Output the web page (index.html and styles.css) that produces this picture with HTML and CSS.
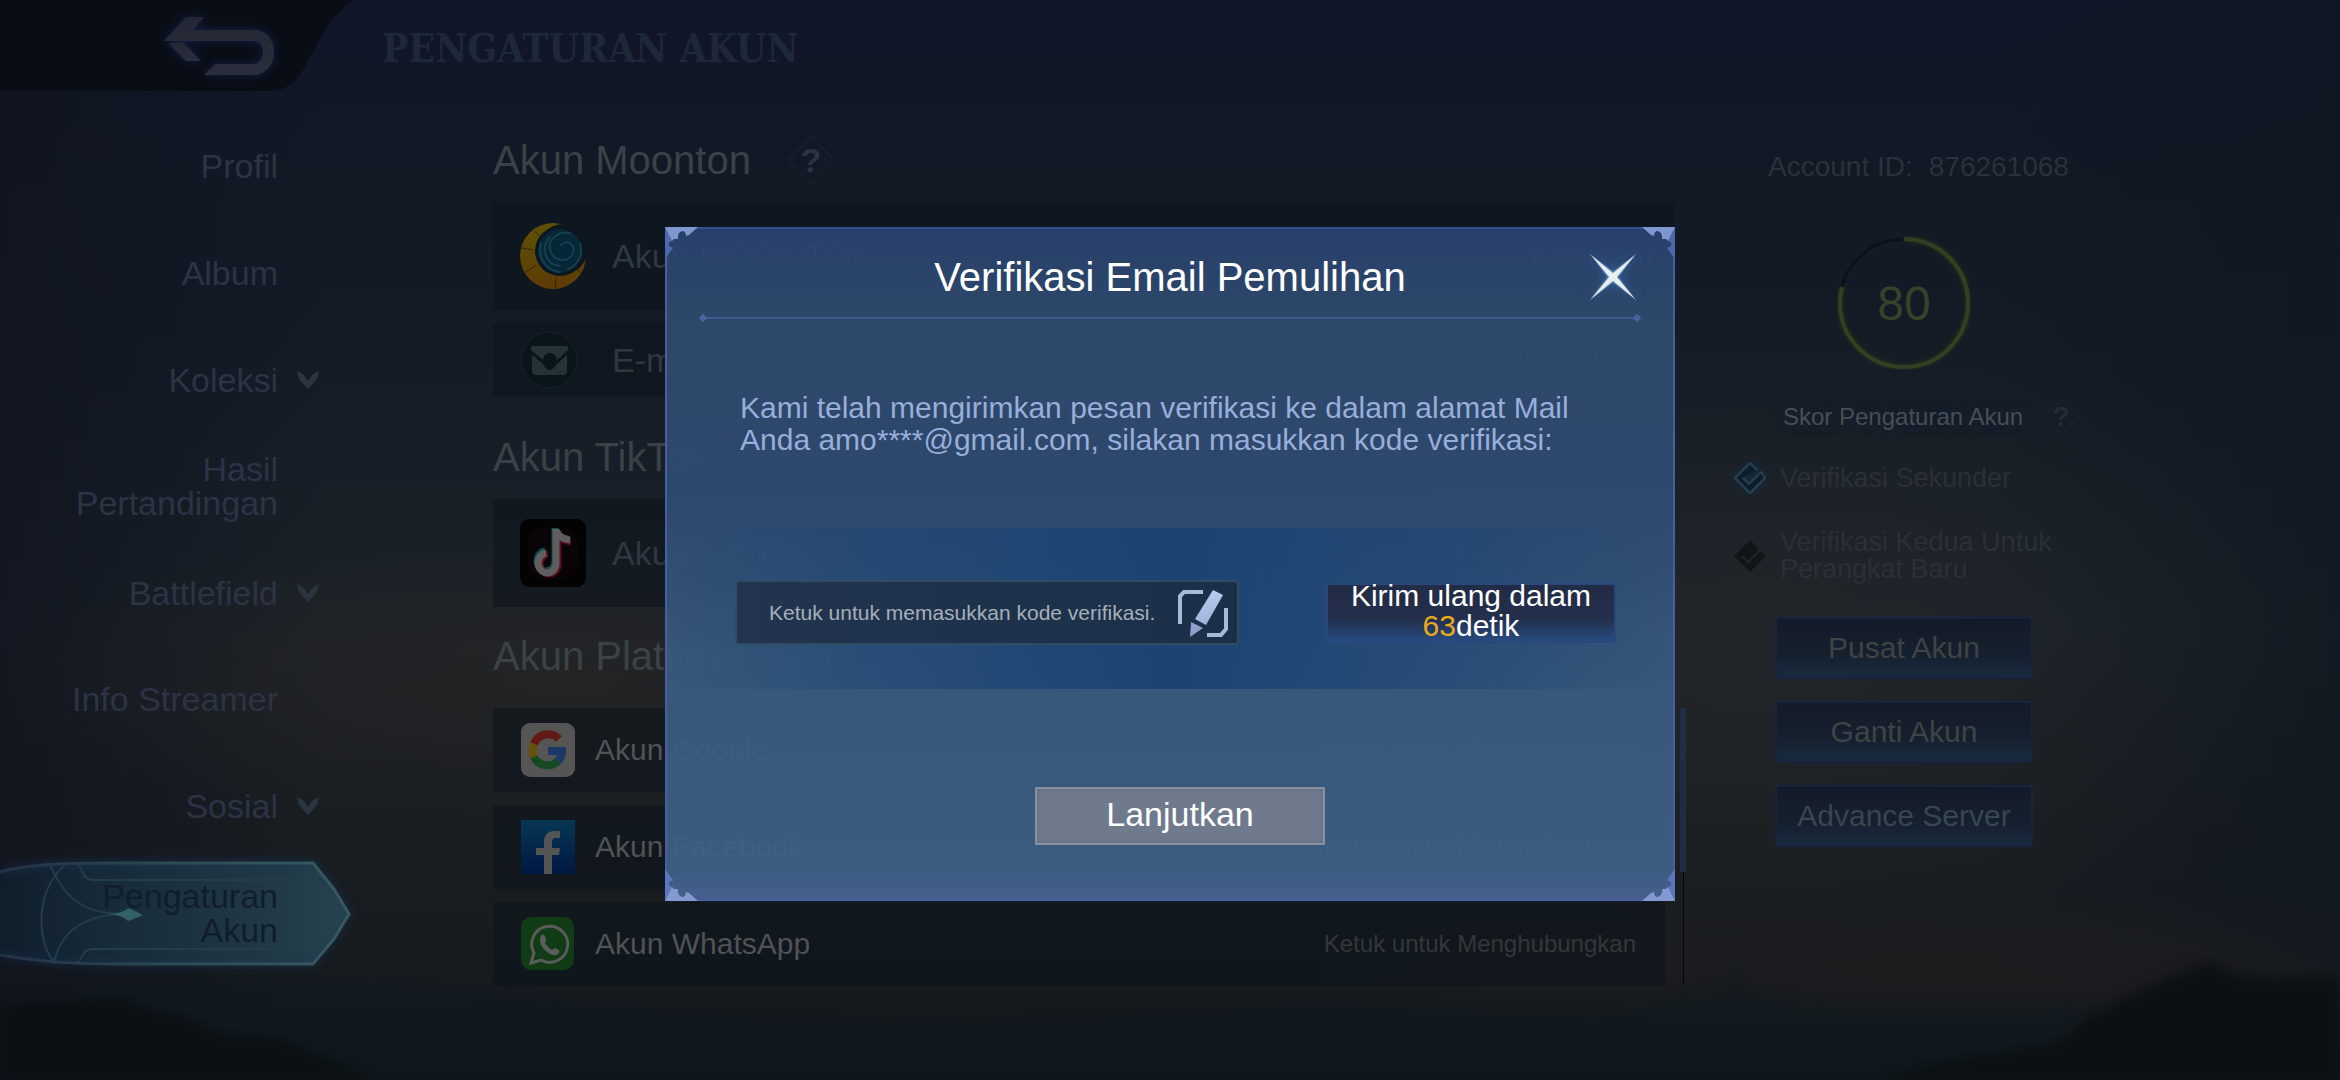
FILE: index.html
```html
<!DOCTYPE html>
<html lang="id">
<head>
<meta charset="utf-8">
<meta name="viewport" content="width=device-width, initial-scale=1">
<title>Pengaturan Akun</title>
<link rel="stylesheet" href="styles.css">
</head>
<body>
<svg class="scenery" viewBox="0 0 2340 140" preserveAspectRatio="none" aria-hidden="true">
  <path class="haze" d="M0 70 Q200 20 520 60 T1100 82 T1600 74 L1700 50 L1728 46 L1734 8 L1742 40 L1770 52 L1850 66 L2060 64 L2340 60 V140 H0Z"/>
  <path class="ridge" d="M0 66 L60 62 L126 57 L140 68 L187 78 L220 95 L275 98 L329 120 L378 140 H0Z"/>
  <path class="ridge" d="M1870 140 L1950 122 L2059 103 L2085 78 L2143 50 L2185 30 L2210 22 L2235 34 L2269 38 L2340 36 V140Z"/>
</svg>

<header class="topbar">
  <button class="back" type="button" aria-label="Kembali">
    <svg width="356" height="92" viewBox="0 0 356 92" aria-hidden="true">
      <defs>
        <linearGradient id="metal" x1="0" y1="0" x2="0" y2="1"><stop offset="0" stop-color="#242733"/><stop offset="1" stop-color="#2a2e3d"/></linearGradient>
      </defs>
      <path fill="#090d16" d="M0 0H353C330 18 325 30 307 62C299 80 288 91 269 91H0Z"/>
      <g class="glow" fill="url(#metal)">
        <path d="M186 17H204L193 30H256C268 31 274 42 274 52C274 63 268 73 256 75H204L215 64H254C260 63 263 58 263 52C263 46 260 41 254 41H164Z"/>
        <path d="M168 43H184L201 61H186Z"/>
      </g>
    </svg>
  </button>
  <h1 class="page-title">PENGATURAN AKUN</h1>
</header>

<main class="layout">
  <nav class="menu" aria-label="Menu">
    <a class="menu-item" href="#profil"><span>Profil</span></a>
    <a class="menu-item" href="#album"><span>Album</span></a>
    <a class="menu-item" href="#koleksi"><span>Koleksi</span><svg class="chevron" viewBox="0 0 22 18" aria-hidden="true"><path d="M0 0L6 3L11 10L16 3L22 0L20 8L11 18L2 8Z"/></svg></a>
    <a class="menu-item" href="#hasil"><span>Hasil Pertandingan</span></a>
    <a class="menu-item" href="#battlefield"><span>Battlefield</span><svg class="chevron" viewBox="0 0 22 18" aria-hidden="true"><path d="M0 0L6 3L11 10L16 3L22 0L20 8L11 18L2 8Z"/></svg></a>
    <a class="menu-item" href="#streamer"><span>Info Streamer</span></a>
    <a class="menu-item" href="#sosial"><span>Sosial</span><svg class="chevron" viewBox="0 0 22 18" aria-hidden="true"><path d="M0 0L6 3L11 10L16 3L22 0L20 8L11 18L2 8Z"/></svg></a>
    <a class="menu-item current" href="#akun" aria-current="page">
      <svg class="marker" viewBox="0 0 360 120" aria-hidden="true">
        <defs>
          <linearGradient id="plate" x1="0" x2="1" y1="0" y2="0"><stop offset="0" stop-color="#101d2b"/><stop offset=".3" stop-color="#172a38"/><stop offset=".85" stop-color="#223c48"/><stop offset="1" stop-color="#2a4551"/></linearGradient>
          <linearGradient id="edge" x1="0" x2="1" y1="0" y2="0"><stop offset="0" stop-color="#263044"/><stop offset=".5" stop-color="#2b4c52"/><stop offset="1" stop-color="#365a60"/></linearGradient>
        </defs>
        <path fill="url(#plate)" d="M0 18C30 10 60 9 120 9H313L334 35L349 60L334 85L313 110H120C60 110 30 106 0 101Z"/>
        <g fill="none" stroke="#223e4a" stroke-width="2">
          <path d="M77 10C84 16 82 26 94 26H322M77 110C84 102 82 95 94 95H322"/>
          <path d="M50 10C66 50 90 60 126 60C90 60 60 74 54 110M66 10C34 36 36 90 56 110"/>
        </g>
        <path fill="#326264" d="M110 60Q126 58 128 54Q136 57 143 61Q134 65 128 67Q124 62 110 60Z"/>
        <path class="edge" fill="none" stroke="url(#edge)" stroke-width="3" d="M0 18C30 10 60 9 120 9H313L334 35L349 60L334 85L313 110H120C60 110 30 106 0 101"/>
      </svg>
      <span>Pengaturan Akun</span>
    </a>
  </nav>

  <div class="accounts">
    <section class="group">
      <h2 class="group-title">Akun Moonton <button class="help" type="button">?</button></h2>
      <div class="row tall">
        <svg class="icon" width="66" height="66" viewBox="0 0 66 66" aria-hidden="true">
          <defs>
            <linearGradient id="gold" x1="0" y1="0" x2="0" y2="1"><stop offset="0" stop-color="#5e5206"/><stop offset="1" stop-color="#5f3b05"/></linearGradient>
            <mask id="crescent"><rect width="66" height="66" fill="#fff"/><circle cx="43" cy="26" r="25" fill="#000"/></mask>
          </defs>
          <circle cx="33" cy="33" r="33" fill="url(#gold)" mask="url(#crescent)"/>
          <circle cx="40" cy="28" r="25" fill="#0b161e"/>
          <circle cx="40" cy="28" r="22" fill="#062736"/>
          <g fill="none" stroke="#163f50" stroke-width="2" stroke-linecap="round"><path d="M21 20C17 34 26 48 40 49M30 14C20 24 25 42 40 43M50 10C36 8 26 18 31 29C35 39 49 40 53 30C56 21 46 16 41 22M60 20C64 32 57 43 48 46"/></g>
          <path d="M1 25L13 27M14 8L20 13M6 49L16 42M35 65L36 55M61 50L56 45" stroke="#2b2608" stroke-width="1"/>
        </svg>
        <span class="name">Akun MOONTON</span><span class="value big">nearfear</span>
      </div>
      <div class="row">
        <svg class="icon" width="66" height="60" viewBox="0 0 66 60" aria-hidden="true">
          <circle cx="29" cy="30" r="28" fill="#0a151b" stroke="#101d24" stroke-width="2"/>
          <path fill="#253339" d="M13 16H46Q49 16 48 20L37 30A7 7 0 0 0 23 30L11 20Q10 16 13 16Z"/>
          <path fill="#253339" d="M12 25L23 34Q29 46 37 34L47 25V41Q47 45 43 45H16Q12 45 12 41Z"/>
        </svg>
        <span class="name">E-mail</span><span class="value">amo****@gmail.com</span>
      </div>
    </section>

    <section class="group">
      <h2 class="group-title">Akun TikTok</h2>
      <div class="row tall inset">
        <svg class="icon" width="66" height="68" viewBox="0 0 66 68" aria-hidden="true">
          <rect width="66" height="68" rx="9" fill="#030304"/>
          <rect x="8" y="8" width="50" height="52" rx="16" fill="#0a0307"/>
          <g fill="none" stroke-width="7"><path stroke="#0d4f50" d="M35 9V41A9 10 0 1 1 25 32M35 10Q38 19 48 20"/><path stroke="#5c0d1d" d="M38 12V43A9 10 0 1 1 28 35M37 13Q41 22 51 23"/><path stroke="#5e5e5e" d="M36 10V42A9 10 0 1 1 26 34M36 11Q39 20 50 21"/></g>
        </svg>
        <span class="name">Akun TikTok</span><span class="value">Ketuk untuk Menghubungkan</span>
      </div>
    </section>

    <section class="group platforms">
      <h2 class="group-title">Akun Platform Lain</h2>
      <div class="row compact inset">
        <svg class="icon" width="54" height="54" viewBox="0 0 54 54" aria-hidden="true">
          <rect width="54" height="54" rx="9" fill="#555"/>
          <g fill="none" stroke-width="8"><path stroke="#611a15" d="M38 16A15 15 0 0 0 13 21"/><path stroke="#675008" d="M13 21A15 15 0 0 0 13 34"/><path stroke="#154923" d="M13 34A15 15 0 0 0 37 38"/><path stroke="#1d3767" d="M37 38A15 15 0 0 0 41 28H27"/></g>
        </svg>
        <span class="name bright">Akun Google</span><span class="value">Ketuk untuk Menghubungkan</span>
      </div>
      <div class="row compact inset">
        <svg class="icon" width="54" height="54" viewBox="0 0 54 54" aria-hidden="true">
          <defs><linearGradient id="fb" x1="0" y1="0" x2="0" y2="1"><stop offset="0" stop-color="#073652"/><stop offset="1" stop-color="#001843"/></linearGradient></defs>
          <rect width="54" height="54" fill="url(#fb)"/>
          <path fill="#555" d="M23 54V35H15V28H23V22C23 14 28 11 34 11H39V18H35C32 18 31 20 31 23V28H39L38 35H31V54Z"/>
        </svg>
        <span class="name bright">Akun Facebook</span><span class="value">Ketuk untuk Menghubungkan</span>
      </div>
      <div class="row compact inset">
        <svg class="icon" width="54" height="54" viewBox="0 0 54 54" aria-hidden="true">
          <rect width="53" height="53" rx="10" fill="#103b15"/>
          <path fill="none" stroke="#5a5c5a" stroke-width="3" d="M10 46L13 36A18 18 0 1 1 20 43Z"/>
          <path fill="#5a5c5a" d="M20 18Q23 16 25 21Q26 23 24 26Q27 31 31 33L34 31Q40 33 38 36Q34 41 26 35Q16 27 20 18Z"/>
        </svg>
        <span class="name bright">Akun WhatsApp</span><span class="value">Ketuk untuk Menghubungkan</span>
      </div>
    </section>
  </div>

  <div class="scrollbar" aria-hidden="true"><span class="thumb"></span></div>

  <aside class="summary">
    <p class="account-id"><span>Account ID:</span><span>876261068</span></p>
    <div class="score">
      <svg width="134" height="134" viewBox="0 0 134 134" aria-hidden="true">
        <circle cx="67" cy="67" r="64" fill="none" stroke="#0b101b" stroke-width="3"/>
        <circle class="score-arc" cx="67" cy="67" r="64" pathLength="100" stroke-dasharray="79 21"/>
      </svg>
      <strong>80</strong>
    </div>
    <p class="score-label">Skor Pengaturan Akun <button class="help small" type="button">?</button></p>
    <ul class="checks">
      <li>
        <svg width="32" height="32" viewBox="0 0 32 32" aria-hidden="true"><path class="check-glow" fill="#0e1d2c" stroke="#26414f" stroke-width="2" d="M23 8L16 1L1 16L16 31L31 16L27 10L15 22L9 16"/></svg>
        <span>Verifikasi Sekunder</span>
      </li>
      <li>
        <svg width="32" height="32" viewBox="0 0 32 32" aria-hidden="true"><path fill="#101518" d="M16 0L32 16L16 32L0 16Z"/><path fill="none" stroke="#20262a" stroke-width="2" d="M8 16L14 22L27 9"/></svg>
        <span>Verifikasi Kedua Untuk Perangkat Baru</span>
      </li>
    </ul>
    <div class="actions">
      <button type="button">Pusat Akun</button>
      <button type="button">Ganti Akun</button>
      <button type="button" class="cool">Advance Server</button>
    </div>
  </aside>
</main>

<div class="overlay">
  <form class="modal" role="dialog" aria-modal="true" aria-labelledby="modal-title">
    <svg class="corner tl" viewBox="0 0 34 34" aria-hidden="true"><path fill="#4f68ad" d="M0 0L7 14Q3 15 4 19L8 21L0 32Z"/><path fill="#7f96cf" d="M0 0H33L24 8L21 9Q21 4 17 4Q12 6 13 12L9 12L7 14Z"/></svg>
    <svg class="corner tr" viewBox="0 0 34 34" aria-hidden="true"><path fill="#4f68ad" d="M0 0L7 14Q3 15 4 19L8 21L0 32Z"/><path fill="#7f96cf" d="M0 0H33L24 8L21 9Q21 4 17 4Q12 6 13 12L9 12L7 14Z"/></svg>
    <svg class="corner bl" viewBox="0 0 34 34" aria-hidden="true"><path fill="#5c77bd" d="M0 0L7 14Q3 15 4 19L8 21L0 32Z"/><path fill="#8299d2" d="M0 0H33L24 8L21 9Q21 4 17 4Q12 6 13 12L9 12L7 14Z"/></svg>
    <svg class="corner br" viewBox="0 0 34 34" aria-hidden="true"><path fill="#5c77bd" d="M0 0L7 14Q3 15 4 19L8 21L0 32Z"/><path fill="#8299d2" d="M0 0H33L24 8L21 9Q21 4 17 4Q12 6 13 12L9 12L7 14Z"/></svg>

    <div class="modal-head">
      <h2 id="modal-title">Verifikasi Email Pemulihan</h2>
      <button class="close" type="button" aria-label="Tutup">
        <svg width="48" height="48" viewBox="0 0 48 48" aria-hidden="true">
          <path fill="#8fb3d6" d="M0 0L24 18L48 0L30 24L48 48L24 30L0 48L18 24Z" opacity=".4"/>
          <path fill="#e6eef2" d="M2 2L24 20L46 2L28 24L46 46L24 28L2 46L20 24Z"/>
        </svg>
      </button>
    </div>
    <p class="message">Kami telah mengirimkan pesan verifikasi ke dalam alamat Mail Anda amo****@gmail.com, silakan masukkan kode verifikasi:</p>
    <div class="band">
      <div class="field">
        <input type="text" aria-label="Kode verifikasi" placeholder="Ketuk untuk memasukkan kode verifikasi.">
        <svg width="52" height="48" viewBox="0 0 52 48" aria-hidden="true">
          <defs><linearGradient id="pen" x1="0" y1="0" x2="0" y2="1"><stop offset="0" stop-color="#b4cbe8"/><stop offset="1" stop-color="#a3b3df"/></linearGradient></defs>
          <g fill="none" stroke="#a9b9da" stroke-width="4"><path d="M26 3H7L3 7V35"/><path d="M49 19V40L44 46H30"/></g>
          <path fill="url(#pen)" d="M36 1L46 6L29 36L18 30Z"/>
          <path fill="#929dcc" d="M14 33L26 39L13 48Z"/>
        </svg>
      </div>
      <button class="resend" type="button"><span>Kirim ulang dalam</span><span><em>63</em>detik</span></button>
    </div>
    <button class="submit" type="submit">Lanjutkan</button>
  </form>
</div>
</body>
</html>
```
FILE: styles.css
```css
* {
  box-sizing: border-box;
}

body {
  margin: 0;
  min-height: 100vh;
  display: flex;
  flex-direction: column;
  position: relative;
  overflow-x: hidden;
  font-family: "Liberation Sans", Arial, sans-serif;
  color: #2c3343;
  background:
    radial-gradient(ellipse 24% 14% at 24% 63%, rgba(44, 38, 34, .55), transparent),
    radial-gradient(ellipse 22% 30% at 75% 60%, rgba(42, 42, 44, .5), transparent),
    radial-gradient(ellipse 30% 8% at 84% 90%, rgba(36, 32, 30, .5), transparent),
    linear-gradient(90deg, rgba(15, 19, 30, .7), transparent 14%, transparent 85%, rgba(15, 22, 32, .6)),
    linear-gradient(#101528 0%, #121925 16%, #151c26 35%, #1b2229 58%, #191e22 75%, #161b20 90%, #0f1519 100%);
}

h1, h2, p, ul {
  margin: 0;
  padding: 0;
  font-weight: normal;
}

button, input {
  margin: 0;
  padding: 0;
  border: 0;
  background: none;
  color: inherit;
  font: inherit;
}

svg {
  display: block;
  flex: none;
}

.scenery {
  position: absolute;
  left: 0;
  bottom: 0;
  width: 100%;
  height: 140px;
  filter: blur(6px);
  z-index: -1;
}

.haze {
  fill: #10191f;
  opacity: .5;
}

.ridge {
  fill: #0b0f13;
  opacity: .9;
}

/* Top bar */
.topbar {
  display: flex;
  align-items: flex-start;
  gap: 26px;
  height: 91px;
}

.glow {
  filter: drop-shadow(0 0 5px #15214a);
}

.page-title {
  padding-top: 24px;
  font: bold 39px/48px "DejaVu Serif Condensed", "DejaVu Serif", serif;
  color: #1d283a;
}

/* Columns */
.layout {
  flex: 1;
  display: grid;
  grid-template-columns: 493px minmax(0, 1fr) 12px 654px;
}

/* Side menu */
.menu {
  display: grid;
  grid-auto-rows: 1fr;
  padding: 22px 0 114px;
}

.menu-item {
  position: relative;
  display: grid;
  grid-template-columns: 220px 22px;
  column-gap: 19px;
  align-items: center;
  padding-left: 58px;
  color: #2c3344;
  font-size: 34px;
  line-height: 34px;
  text-align: right;
  text-decoration: none;
}

.menu-item span {
  position: relative;
}

.chevron {
  width: 22px;
  height: 18px;
  fill: #2b3540;
}

.current {
  color: #101d2e;
}

.marker {
  position: absolute;
  left: 0;
  top: -5px;
  width: 360px;
  height: 120px;
}

.edge {
  filter: drop-shadow(0 0 4px #18365c);
}

/* Account list */
.accounts {
  padding-top: 45px;
  padding-bottom: 60px;
}

.group {
  margin-bottom: 25px;
}

.group:first-child {
  margin-bottom: 36px;
}

.group:last-child {
  margin-bottom: 0;
}

.group-title {
  display: flex;
  align-items: center;
  gap: 36px;
  margin-bottom: 18px;
  font-size: 40px;
  line-height: 48px;
  color: #3a4147;
}

.help {
  position: relative;
  width: 48px;
  height: 48px;
  font-weight: bold;
  font-size: 34px;
  line-height: 48px;
  color: #2e3240;
}

.help::before {
  content: "";
  position: absolute;
  inset: 7px;
  border: 1px solid #1d232e;
  transform: rotate(45deg);
}

.help.small {
  width: 40px;
  height: 40px;
  font-size: 28px;
  line-height: 40px;
  color: #262a3b;
}

.row {
  display: flex;
  align-items: center;
  gap: 26px;
  height: 74px;
  padding: 0 17px 0 27px;
  background: rgba(9, 18, 26, .5);
  font-size: 34px;
  line-height: 40px;
  color: #30383f;
}

.row.tall {
  height: 108px;
}

.row.inset {
  padding-right: 38px;
}

.row.compact {
  height: 84px;
  gap: 20px;
  padding-left: 28px;
  padding-right: 29px;
  margin-right: 9px;
  font-size: 30px;
}

.row + .row {
  margin-top: 13px;
}

.platforms .group-title {
  margin-bottom: 28px;
}

.name {
  flex: 1;
}

.bright {
  color: #505356;
}

.value {
  font-size: 24px;
  color: #33373a;
}

.big {
  font-size: 34px;
}

/* Scroll indicator */
.scrollbar {
  display: flex;
  flex-direction: column;
  align-items: center;
  padding: 617px 0 95px 6px;
}

.scrollbar::after {
  content: "";
  flex: 1;
  width: 1px;
  background: #040506;
}

.thumb {
  width: 6px;
  height: 164px;
  background: #1f2d45;
}

/* Right column */
.summary {
  display: flex;
  flex-direction: column;
  align-items: center;
  justify-self: start;
  width: 340px;
  margin-left: 48px;
  padding-top: 60px;
}

.account-id {
  display: flex;
  gap: 16px;
  align-self: flex-start;
  margin-left: 34px;
  font-size: 28px;
  line-height: 32px;
  white-space: nowrap;
  color: #2b313a;
}

.score {
  display: grid;
  place-items: center;
  margin-top: 53px;
}

.score > * {
  grid-area: 1 / 1;
}

.score strong {
  font-size: 48px;
  font-weight: normal;
  color: #37422b;
}

.score-arc {
  fill: none;
  stroke: #333f22;
  stroke-width: 4;
  transform: rotate(-90deg);
  transform-origin: center;
  filter: drop-shadow(0 0 2px #263610);
}

.score-label {
  display: flex;
  align-items: center;
  gap: 18px;
  align-self: flex-start;
  margin: 27px 0 0 49px;
  font-size: 24px;
  line-height: 40px;
  white-space: nowrap;
  color: #4b4d50;
  text-shadow: 0 0 12px #0d2140;
}

.checks {
  width: 100%;
  margin-top: 25px;
  list-style: none;
  font-size: 27px;
  line-height: 27px;
  color: #2a3036;
}

.checks li {
  display: flex;
  align-items: center;
  gap: 14px;
  min-height: 32px;
}

.checks li + li {
  margin-top: 35px;
}

.check-glow {
  filter: drop-shadow(0 0 3px #102f4c);
}

.actions {
  display: grid;
  gap: 22px;
  width: 258px;
  margin-top: 34px;
}

.actions button {
  height: 62px;
  border: 2px solid #17243f;
  border-radius: 3px;
  background: linear-gradient(#141a27, #15202e 60%, #192a3e);
  font-size: 30px;
  color: #3f4344;
}

.actions .cool {
  color: #37474d;
}

/* Verification dialog */
.overlay {
  position: absolute;
  inset: 0;
  display: grid;
  place-items: center;
  padding-top: 48px;
}

.modal {
  position: relative;
  display: flex;
  flex-direction: column;
  width: min(1010px, 94vw);
  border: 2px solid #46609f;
  border-top-color: #35508c;
  background: linear-gradient(rgba(42, 66, 112, .94), rgba(47, 75, 109, .94) 14%, rgba(47, 75, 114, .94) 38%, rgba(57, 91, 127, .94) 68%, rgba(62, 96, 136, .94) 96%, rgba(74, 99, 148, .94));
}

.corner {
  position: absolute;
  width: 34px;
  height: 34px;
}

.tl {
  left: -2px;
  top: -2px;
}

.tr {
  right: -2px;
  top: -2px;
  transform: scaleX(-1);
}

.bl {
  left: -2px;
  bottom: -2px;
  transform: scaleY(-1);
}

.br {
  right: -2px;
  bottom: -2px;
  transform: scale(-1);
}

.modal-head {
  position: relative;
  display: grid;
  grid-template-columns: 1fr auto 1fr;
  align-items: center;
  height: 90px;
  margin: 0 36px;
  padding-top: 7px;
  border-bottom: 2px solid #3c5b90;
}

.modal-head::before,
.modal-head::after {
  content: "";
  position: absolute;
  bottom: -4px;
  width: 6px;
  height: 6px;
  background: #4564a2;
  transform: rotate(45deg);
}

.modal-head::before {
  left: -3px;
}

.modal-head::after {
  right: -3px;
}

.modal-head h2 {
  grid-column: 2;
  font-size: 40px;
  line-height: 48px;
  color: #fff;
}

.close {
  justify-self: end;
  filter: drop-shadow(0 0 6px #2f62a0);
}

.message {
  margin: 73px 90px 72px 73px;
  font-size: 30px;
  line-height: 32px;
  color: #98aedb;
}

.band {
  display: flex;
  justify-content: space-between;
  align-items: center;
  padding: 52px 57px 44px 68px;
  background: linear-gradient(90deg, rgba(25, 68, 116, 0), rgba(25, 68, 116, .5) 22%, #1b4473 50%, rgba(25, 68, 116, .5) 78%, rgba(25, 68, 116, 0));
}

.field {
  display: flex;
  align-items: center;
  width: 504px;
  height: 65px;
  padding: 0 8px 0 32px;
  border: 2px solid #2f4c63;
  border-radius: 3px;
  background: linear-gradient(90deg, #22344f, #1b3048);
}

.field input {
  flex: 1;
  min-width: 0;
  height: 100%;
  font-size: 21px;
  color: #fff;
}

.field input::placeholder {
  color: #a5afb9;
  opacity: 1;
}

.resend {
  display: grid;
  place-content: center;
  justify-items: center;
  width: 290px;
  height: 60px;
  padding-bottom: 4px;
  border: 2px solid #28477c;
  border-radius: 3px;
  background: linear-gradient(#232c46, #232f4c 60%, #284b80);
  font-size: 30px;
  line-height: 30px;
  color: #fff;
}

.resend em {
  font-style: normal;
  color: #eaaa1b;
}

.submit {
  align-self: center;
  width: 290px;
  height: 58px;
  margin: 98px 0 54px 20px;
  padding-bottom: 4px;
  border: 2px solid #8591a3;
  box-shadow: 0 0 2px #44546a, inset 0 0 6px #657083;
  background: #6f7b8d;
  font-size: 34px;
  color: #fff;
}
```
